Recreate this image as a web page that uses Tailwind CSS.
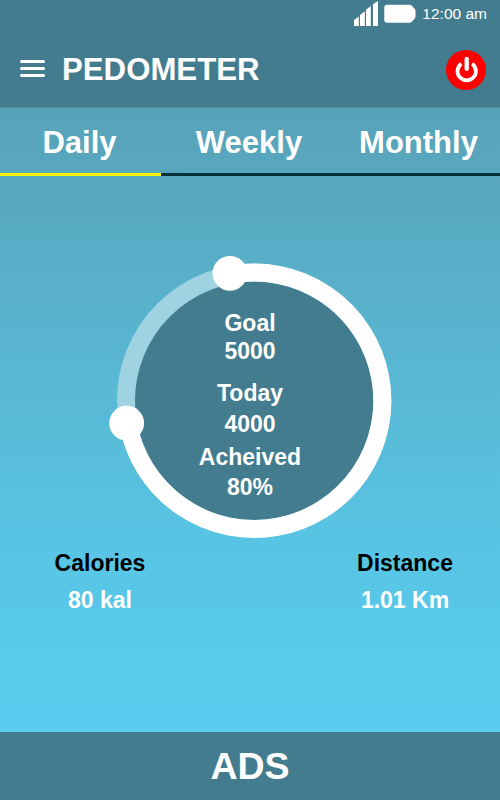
<!DOCTYPE html>
<html lang="en">
<head>
    <meta charset="UTF-8">
    <meta name="viewport" content="width=device-width, initial-scale=1.0">
    <title>Pedometer</title>
    <script src="https://cdn.jsdelivr.net/npm/@tailwindcss/browser@4"></script>
</head>
<body class="bg-[#427c8e]">
    <div class="w-[500px] h-[800px] flex flex-col overflow-hidden text-white font-bold font-['Liberation_Sans',Arial,sans-serif]">
        <!-- Header -->
        <header class="h-[107px] shrink-0 bg-[#427c8e]">
            <!-- Status bar -->
            <div class="h-7 flex justify-end items-center pr-[13px]">
                <svg class="w-[26px] h-7" viewBox="0 0 26 28" fill="#fff">
                    <path d="M1 20l4.8-3.5V26H1zM7 15l4.8-3.8V26H7zM13 9.8L17.8 6v20H13zM20 4.2L25 1v25h-5z"/>
                </svg>
                <svg class="w-8 h-7 ml-[5px]" viewBox="0 0 32 28" fill="#fff">
                    <path d="M3 4.8h22.5q2 0 3 1.8l2.3 2.4q.7.8.7 2v5.5q0 1.2-.7 2l-2.3 2.4q-1 1.8-3 1.8H3q-2.7 0-2.7-2.7V7.500Q.3 4.8 3 4.800z"/>
                </svg>
                <span class="ml-[6px] text-[15.5px] leading-7 font-normal whitespace-nowrap">12:00 am</span>
            </div>
            <!-- Title row -->
            <div class="h-[82px] flex items-center pl-5 pr-[14px]">
                <button class="w-[25px] h-[17px] -mt-px flex flex-col justify-between">
                    <span class="w-full h-[3px] rounded-full bg-white"></span>
                    <span class="w-full h-[3px] rounded-full bg-white"></span>
                    <span class="w-full h-[3px] rounded-full bg-white"></span>
                </button>
                <h1 class="ml-[17px] mt-px text-[31.2px] leading-9">PEDOMETER</h1>
                <button class="ml-auto">
                    <svg class="w-10 h-10 mt-px" viewBox="0 0 40 40" fill="none" stroke="#fff">
                        <circle cx="20" cy="20" r="20" fill="#f00" stroke="none"/>
                        <path d="M15.300 13.700a9.200 9.200 0 1 0 10.800 0" stroke-width="3.8"/>
                        <path d="M20.700 8.900v10" stroke-width="4.3" stroke-linecap="round"/>
                    </svg>
                </button>
            </div>
        </header>

        <main class="h-[625px] shrink-0 flex flex-col bg-linear-to-b from-[#58a2b8] from-0% via-[#58c4e3] via-68% to-[#58cdef] to-100%">
            <!-- Tabs -->
            <nav class="h-[69px] shrink-0 grid grid-cols-[161px_176px_163px] border-t border-[#4f8ea2] text-[31px] leading-[61px] text-center">
                <a class="pt-1 pr-[2px] border-b-[3px] border-[#fdf000]">Daily</a>
                <a class="pt-1 border-b-[3px] border-[#06303c]">Weekly</a>
                <a class="pt-1 border-b-[3px] border-[#06303c]">Monthly</a>
            </nav>

            <!-- Progress ring -->
            <section class="relative h-[369px] shrink-0">
                <svg class="w-[500px] h-[369px]" viewBox="0 176 500 369" fill="none">
                    <circle cx="254.2" cy="400.8" r="120" fill="#427c8e"/>
                    <circle cx="254.2" cy="400.8" r="128.2" stroke="#9fd3e2" stroke-width="18"/>
                    <path d="M230 274.9A128.2 128.2 0 1 1 127.9 423" stroke="#fff" stroke-width="18"/>
                    <circle cx="229.9" cy="273.3" r="17.4" fill="#fff"/>
                    <circle cx="126.7" cy="423.2" r="17.4" fill="#fff"/>
                </svg>
                <div class="absolute inset-x-0 top-[133px] text-[23px] leading-7 text-center">
                    <p>Goal</p>
                    <p>5000</p>
                    <p class="mt-[14px]">Today</p>
                    <p class="mt-[3px]">4000</p>
                    <p class="mt-[5px]">Acheived</p>
                    <p class="mt-[2px]">80%</p>
                </div>
            </section>

            <!-- Stats -->
            <section class="flex justify-between px-[45px] text-[23px] text-center">
                <div class="w-[110px]">
                    <p class="text-black leading-9">Calories</p>
                    <p class="leading-9 mt-px">80 kal</p>
                </div>
                <div class="w-[100px]">
                    <p class="text-black leading-9">Distance</p>
                    <p class="leading-9 mt-px">1.01 Km</p>
                </div>
            </section>
        </main>

        <!-- Ad banner -->
        <footer class="flex-1 bg-[#427c8e] text-center text-[37.5px] leading-[68px]">ADS</footer>
    </div>
</body>
</html>
